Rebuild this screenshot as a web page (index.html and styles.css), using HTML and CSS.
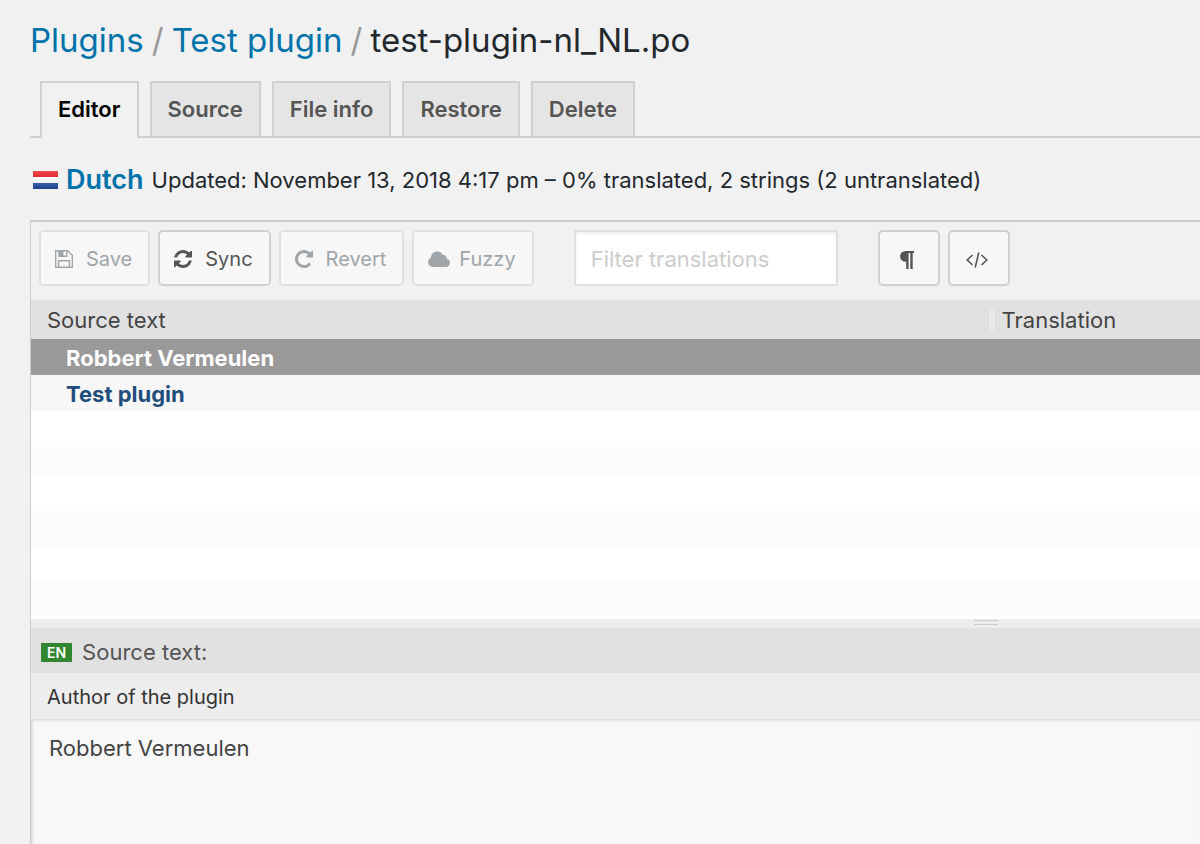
FILE: index.html
```html
<!DOCTYPE html>
<html lang="en">
<head>
    <meta charset="UTF-8">
    <meta name="viewport" content="width=device-width, initial-scale=1.0">
    <title>test-plugin-nl_NL.po</title>
    <link rel="stylesheet" href="styles.css">
</head>
<body>
    <h1 class="breadcrumb">
        <a href="#">Plugins</a>
        <span class="sep">/</span>
        <a href="#">Test plugin</a>
        <span class="sep">/</span>
        <span>test-plugin-nl_NL.po</span>
    </h1>

    <nav class="tabs">
        <a class="tab active" href="#">Editor</a>
        <a class="tab" href="#">Source</a>
        <a class="tab" href="#">File info</a>
        <a class="tab" href="#">Restore</a>
        <a class="tab" href="#">Delete</a>
    </nav>

    <div class="status">
        <span class="flag"></span>
        <a class="lang" href="#">Dutch</a>
        <span>Updated: November 13, 2018 4:17 pm – 0% translated, 2 strings (2 untranslated)</span>
    </div>

    <main class="editor">
        <div class="toolbar">
            <button class="btn" type="button" disabled>
                <svg class="icon" viewBox="0 0 18 18" fill="none" stroke="currentColor" stroke-width="1.4">
                    <path d="M.7.7h12.1l4.5 4.5v12.1H.7z"/>
                    <path d="M4.2.7v5.6h7.6V.7M3.6 17.3v-6.5h10.8v6.5"/>
                    <path d="M4.2.7h3.6v5.6H4.2z" fill="currentColor"/>
                </svg>
                <span>Save</span>
            </button>
            <button class="btn" type="button">
                <svg class="icon" viewBox="0 0 1536 1536" fill="currentColor">
                    <path d="M1511 928q0 5-1 7-64 268-268 434.500T764 1536q-146 0-282.500-55T238 1324l-129 129q-19 19-45 19t-45-19-19-45V960q0-26 19-45t45-19h448q26 0 45 19t19 45-19 45l-137 137q71 66 161 102t187 36q134 0 250-65t186-179q11-17 53-117 8-23 30-23h192q13 0 22.500 9.500t9.500 22.500zm25-800v448q0 26-19 45t-45 19h-448q-26 0-45-19t-19-45 19-45l138-138Q969 256 768 256q-134 0-250 65T332 500q-11 17-53 117-8 23-30 23H50q-13 0-22.500-9.500T18 608v-7q65-268 270-434.500T768 0q146 0 284 55.500T1297 212l130-129q19-19 45-19t45 19 19 45z"/>
                </svg>
                <span>Sync</span>
            </button>
            <button class="btn" type="button" disabled>
                <svg class="icon" viewBox="0 0 1536 1536" fill="currentColor">
                    <path d="M1536 128v448q0 26-19 45t-45 19h-448q-42 0-59-40-17-39 14-69l138-138Q969 256 768 256q-104 0-198.500 40.500T406 406 296.500 569.500 256 768t40.500 198.500T406 1130t163.500 109.500T768 1280q119 0 225-52t179-147q7-10 23-12 15 0 25 9l137 138q9 8 9.500 20.500T1358 1259q-109 132-264 204.500T768 1536q-156 0-298-61t-245-164-164-245T0 768t61-298 164-245T470 61 768 0q147 0 284.500 55.500T1297 212l130-129q29-31 70-14 39 17 39 59z"/>
                </svg>
                <span>Revert</span>
            </button>
            <button class="btn btn-fuzzy" type="button" disabled>
                <svg class="icon cloud" viewBox="0 0 22 16" fill="currentColor">
                    <path d="M5 16a5 5 0 0 1-2-9.500A6.200 6.200 0 0 1 14.600 3.700 3.500 3.500 0 0 1 18.600 7.700 4.200 4.200 0 0 1 17.800 16z"/>
                </svg>
                <span>Fuzzy</span>
            </button>
            <input class="filter" type="text" placeholder="Filter translations" aria-label="Filter translations">
            <button class="btn square" type="button" aria-label="Toggle invisibles">
                <svg class="icon pilcrow" viewBox="0 0 14 18" fill="currentColor">
                    <path d="M5.500 0H14v2h-1.300v16h-2.400V2H8.600v16H6.200v-7.200H5.500a5.400 5.400 0 0 1 0-10.800z"/>
                </svg>
            </button>
            <button class="btn square" type="button" aria-label="Toggle code view">
                <svg class="icon code" viewBox="0 0 22 16" fill="none" stroke="currentColor" stroke-width="1.600">
                    <path d="M6.500 3 1.200 8l5.300 5M15.500 3l5.300 5-5.300 5M12.800.5 9.200 15.500"/>
                </svg>
            </button>
        </div>

        <div class="list">
            <table class="strings">
                <thead>
                    <tr>
                        <th class="col-source">Source text</th>
                        <th><span class="col-label">Translation</span></th>
                    </tr>
                </thead>
                <tbody>
                    <tr class="selected">
                        <td>Robbert Vermeulen</td>
                        <td></td>
                    </tr>
                    <tr>
                        <td>Test plugin</td>
                        <td></td>
                    </tr>
                </tbody>
            </table>
        </div>

        <div class="splitter"><span class="grip"></span></div>

        <section class="source">
            <h2 class="source-title"><span class="badge">EN</span>Source text:</h2>
            <p class="notes">Author of the plugin</p>
            <div class="source-text">Robbert Vermeulen</div>
        </section>
    </main>
</body>
</html>
```

FILE: styles.css
```css
* {
    box-sizing: border-box;
}

body {
    display: flex;
    flex-direction: column;
    min-height: 100vh;
    margin: 0;
    padding: 16px 0 0 30px;
    background: #f1f1f1;
    color: #23282d;
    font-family: Inter, "Liberation Sans", sans-serif;
    font-size: 22px;
}

a {
    color: #0073aa;
    text-decoration: none;
}

/* Heading */
.breadcrumb {
    display: flex;
    gap: 8px;
    margin: 0;
    font-size: 33px;
    font-weight: 400;
    line-height: 48px;
}

.sep {
    color: #999;
}

/* Tabs */
.tabs {
    display: flex;
    gap: 11px;
    margin-top: 17px;
    padding-left: 10px;
    border-bottom: 2px solid #d0d0d0;
}

.tab {
    padding: 0 16px;
    border: 2px solid #d0d0d0;
    border-bottom: 0;
    background: #e5e5e5;
    color: #555;
    font-weight: 600;
    line-height: 53px;
}

.tab.active {
    margin-bottom: -2px;
    padding-bottom: 2px;
    background: #f1f1f1;
    color: #000;
}

/* Language and progress */
.status {
    display: flex;
    align-items: center;
    gap: 8px;
    margin: 22px 0 20px;
    padding-left: 3px;
    line-height: 40px;
}

.flag {
    width: 25px;
    height: 18px;
    background: linear-gradient(#f04a4e, #e02a30 33%, #fff 33%, #eee 66%, #3a5ea8 66%, #1f3f8a);
}

.lang {
    font-size: 27px;
    font-weight: 600;
}

/* Editor */
.editor {
    display: flex;
    flex: 1;
    flex-direction: column;
    border: solid #ccc;
    border-width: 2px 0 0 1px;
}

.toolbar {
    display: flex;
    gap: 8px;
    padding: 8px 8px 14px;
}

.btn {
    display: flex;
    align-items: center;
    justify-content: center;
    gap: 13px;
    height: 56px;
    padding: 2px 16px 0 14px;
    border: 2px solid #d0d0d0;
    border-radius: 5px;
    background: #f7f7f7;
    color: #555;
    font: inherit;
    font-size: 20px;
}

.btn:disabled {
    border-color: #e0e0e0;
    color: #a0a5aa;
}

.btn-fuzzy {
    gap: 9px;
}

.icon {
    width: 18px;
    height: 18px;
}

.cloud {
    width: 22px;
    height: 16px;
}

.square {
    width: 62px;
    padding: 4px 4px 0 0;
}

.pilcrow {
    width: 14px;
}

.code {
    width: 22px;
    height: 16px;
}

.filter {
    width: 264px;
    height: 56px;
    margin: 0 32px;
    padding: 2px 15px 0;
    border: 2px solid #e0e0e0;
    background: #fff;
    box-shadow: inset 0 2px 3px rgba(0, 0, 0, 0.07);
    font: inherit;
}

.filter::placeholder {
    color: #ccc;
}

/* String list */
.list {
    height: 319px;
    background: repeating-linear-gradient(#fff 0 35px, #fcfcfc 35px 70px) 0 106px;
}

.strings {
    width: 100%;
    border-collapse: collapse;
    table-layout: fixed;
    line-height: 34px;
}

.strings th {
    height: 39px;
    padding: 0 0 0 16px;
    background: #e1e1e1;
    color: #444;
    font-weight: 400;
    text-align: left;
}

.strings th + th {
    padding: 0;
}

.col-source {
    width: 82%;
}

.col-label {
    display: block;
    padding-left: 8px;
    border-left: 4px double #f1f1f1;
    line-height: 24px;
}

.strings td {
    height: 36px;
    padding: 2px 0 0 35px;
    background: #f7f7f7;
    color: #1f4e7c;
    font-weight: 700;
}

.strings .selected td {
    background: #999;
    color: #fff;
}

.splitter {
    display: flex;
    justify-content: flex-end;
    height: 9px;
    padding: 1px 202px 0 0;
    background: #ededed;
}

.grip {
    width: 24px;
    height: 5px;
    border: solid #ccc;
    border-width: 1px 0;
}

/* Source pane */
.source {
    display: flex;
    flex: 1;
    flex-direction: column;
}

.source-title {
    display: flex;
    align-items: center;
    gap: 10px;
    margin: 0;
    padding: 3px 0 0 10px;
    background: #e1e1e1;
    color: #555;
    font-size: 22px;
    font-weight: 400;
    line-height: 42px;
}

.badge {
    padding: 0 6px;
    background: #31862f;
    color: #fff;
    font-size: 14px;
    font-weight: 600;
    line-height: 19px;
}

.notes {
    margin: 0;
    padding: 2px 0 0 16px;
    background: #ededed;
    color: #333;
    font-size: 20px;
    line-height: 44px;
}

.source-text {
    flex: 1;
    padding: 10px 17px;
    border: solid #ddd;
    border-width: 1px 0 0 1px;
    background: #f8f8f8;
    box-shadow: inset 1px 1px 3px rgba(0, 0, 0, 0.1);
    color: #444;
    line-height: 36px;
}
```
